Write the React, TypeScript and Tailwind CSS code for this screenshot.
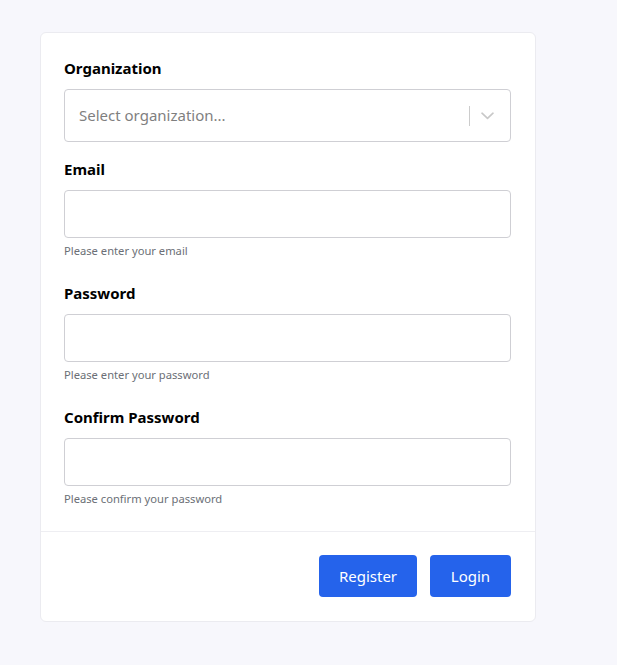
import React from "react";

function Field({ label, help }: { label: string; help: string }) {
  return (
    <div>
      <div className="h-6 leading-[22px] text-[15px] font-bold text-black">{label}</div>
      <input className="mt-2 block h-12 w-full rounded border border-[#cfcfd4] bg-white px-3 outline-none" />
      <div className="mt-[5px] h-4 text-[11.2px] leading-4 text-[#6b6f76]">{help}</div>
    </div>
  );
}

export default function App() {
  return (
    <div
      className="min-h-[665px] w-full bg-[#f7f7fc] pl-10 pt-8"
      style={{ fontFamily: '"Noto Sans", "Open Sans", sans-serif' }}
    >
      <div className="w-[496px] rounded-md border border-[#ebebf0] bg-white">
        <div className="pl-[23px] pr-6 pt-6 pb-6">
          <div>
            <div className="h-6 leading-[22px] text-[15px] font-bold text-black">Organization</div>
            <div className="mt-2 flex h-[53px] items-center rounded border border-[#cfcfd4] bg-white pl-[14px]">
              <span className="flex-1 text-[15px] text-[#7f7f7f]">Select organization...</span>
              <span className="h-5 w-px bg-[#cccccc]" />
              <span className="flex w-10 items-center pl-[11px]">
                <svg width="13" height="8" viewBox="0 0 13 8" fill="none" stroke="#c8c8c8" strokeWidth="1.6" strokeLinecap="round" strokeLinejoin="round">
                  <path d="M1 1.2 L6.5 6.4 L12 1.2" />
                </svg>
              </span>
            </div>
          </div>
          <div className="mt-[16px]">
            <Field label="Email" help="Please enter your email" />
          </div>
          <div className="mt-[23px]">
            <Field label="Password" help="Please enter your password" />
          </div>
          <div className="mt-[23px]">
            <Field label="Confirm Password" help="Please confirm your password" />
          </div>
        </div>
        <div className="flex justify-end gap-[13px] border-t border-[#eeeef2] pl-[23px] pr-6 pt-[23px] pb-6">
          <button className="h-[42px] w-[98px] rounded bg-[#2563eb] text-[15px] text-white">Register</button>
          <button className="h-[42px] w-[81px] rounded bg-[#2563eb] text-[15px] text-white">Login</button>
        </div>
      </div>
    </div>
  );
}
